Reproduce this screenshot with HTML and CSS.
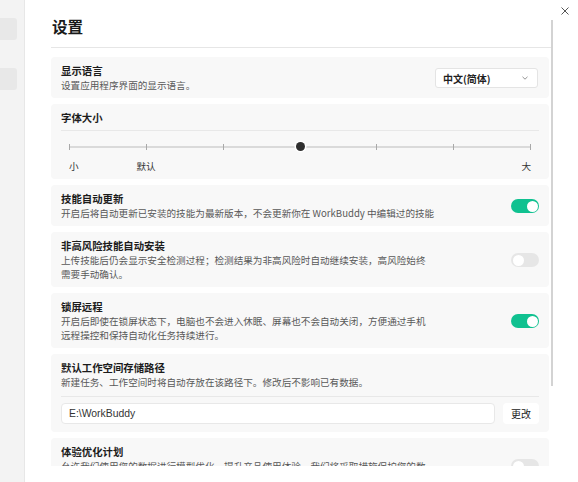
FILE: index.html
```html
<!DOCTYPE html>
<html lang="zh-CN">
<head>
<meta charset="utf-8">
<title>设置</title>
<link rel="stylesheet" href="styles.css">
</head>
<body>
<div class="app">
  <aside class="sidebar">
    <div class="nav-item"></div>
    <div class="nav-item"></div>
  </aside>
  <main class="main">
    <button class="close" aria-label="关闭">
      <svg width="8" height="8" viewBox="0 0 8 8"><path d="M0.5 0.5L7.5 7.5M7.5 0.5L0.5 7.5" stroke="#555" stroke-width="1" fill="none"/></svg>
    </button>
    <div class="scrollbar"></div>
    <div class="content">
      <h1 class="page-title">设置</h1>
      <div class="rule"></div>
      <div class="list">
        <section class="card">
          <div class="card-row">
            <div class="card-text">
              <div class="card-title">显示语言</div>
              <div class="card-desc">设置应用程序界面的显示语言。</div>
            </div>
            <div class="select">
              <span>中文(简体)</span>
              <svg width="6" height="4" viewBox="0 0 6 4"><path d="M0.5 0.8L3 3.2L5.5 0.8" stroke="#888" stroke-width="0.9" fill="none"/></svg>
            </div>
          </div>
        </section>

        <section class="card">
          <div class="card-title">字体大小</div>
          <div class="card-divider"></div>
          <div class="slider">
            <div class="track">
              <span class="tick"></span><span class="tick"></span><span class="tick"></span><span class="tick"></span><span class="tick"></span><span class="tick"></span><span class="tick"></span>
              <span class="thumb"></span>
            </div>
            <div class="scale">
              <span class="s-small">小</span>
              <span class="s-default">默认</span>
              <span class="s-large">大</span>
            </div>
          </div>
        </section>

        <section class="card">
          <div class="card-row">
            <div class="card-text">
              <div class="card-title">技能自动更新</div>
              <div class="card-desc">开启后将自动更新已安装的技能为最新版本，不会更新你在 WorkBuddy 中编辑过的技能</div>
            </div>
            <span class="toggle on"><span class="knob"></span></span>
          </div>
        </section>

        <section class="card">
          <div class="card-row">
            <div class="card-text">
              <div class="card-title">非高风险技能自动安装</div>
              <div class="card-desc">上传技能后仍会显示安全检测过程；检测结果为非高风险时自动继续安装，高风险始终<br>需要手动确认。</div>
            </div>
            <span class="toggle"><span class="knob"></span></span>
          </div>
        </section>

        <section class="card">
          <div class="card-row">
            <div class="card-text">
              <div class="card-title">锁屏远程</div>
              <div class="card-desc">开启后即使在锁屏状态下，电脑也不会进入休眠、屏幕也不会自动关闭，方便通过手机<br>远程操控和保持自动化任务持续进行。</div>
            </div>
            <span class="toggle on"><span class="knob"></span></span>
          </div>
        </section>

        <section class="card">
          <div class="card-title">默认工作空间存储路径</div>
          <div class="card-desc">新建任务、工作空间时将自动存放在该路径下。修改后不影响已有数据。</div>
          <div class="card-divider wide"></div>
          <div class="path-row">
            <div class="path-input">E:\WorkBuddy</div>
            <button class="path-btn">更改</button>
          </div>
        </section>

        <section class="card">
          <div class="card-row">
            <div class="card-text">
              <div class="card-title">体验优化计划</div>
              <div class="card-desc">允许我们使用您的数据进行模型优化，提升产品使用体验。我们将采取措施保护您的数<br>据安全。</div>
            </div>
            <span class="toggle"><span class="knob"></span></span>
          </div>
        </section>
      </div>
    </div>
  </main>
</div>
</body>
</html>
```

FILE: styles.css
```css
html, body {
  margin: 0;
  padding: 0;
  background: #ffffff;
  font-family: "Noto Sans CJK SC", "Noto Sans", sans-serif;
  color: #1f1f1f;
}

.app {
  display: flex;
  height: 482px;
  overflow: hidden;
}

.sidebar {
  width: 24px;
  flex: none;
  background: #f3f3f3;
  border-right: 1px solid #e7e7e7;
  padding-top: 18px;
  display: flex;
  flex-direction: column;
  gap: 28px;
}

.nav-item {
  width: 17px;
  height: 22px;
  background: #e8e8e8;
  border-radius: 0 3px 3px 0;
}

.main {
  flex: 1;
  position: relative;
  padding-left: 26px;
}

.close {
  position: absolute;
  top: 7px;
  right: 9px;
  width: 8px;
  height: 8px;
  padding: 0;
  border: none;
  background: transparent;
  display: flex;
}

.scrollbar {
  position: absolute;
  left: 526px;
  top: 20px;
  width: 2px;
  height: 366px;
  background: #d3d3d3;
}

.content {
  width: 502px;
  height: 466px;
  display: flex;
  flex-direction: column;
}

.page-title {
  margin: 0 0 10px;
  padding: 15px 0 0 1px;
  font-size: 15.6px;
  line-height: 22px;
  font-weight: 700;
  color: #1a1a1a;
}

.rule {
  height: 1px;
  background: #e6e6e6;
  flex: none;
}

.list {
  margin-top: 9px;
  width: 498px;
  flex: 1;
  min-height: 0;
  overflow: hidden;
  display: flex;
  flex-direction: column;
  gap: 6px;
}

.card {
  flex: none;
  background: #f8f8f8;
  border-radius: 4px;
  padding: 7px 10px 6px;
}

.card-row {
  display: flex;
  align-items: center;
  justify-content: space-between;
}

.card-text {
  max-width: 420px;
}

.card-title {
  font-size: 10.4px;
  line-height: 14px;
  font-weight: 700;
  color: #1c1c1c;
}

.card-desc {
  font-size: 9.6px;
  line-height: 14px;
  color: #595959;
}

.select {
  width: 103px;
  height: 20px;
  box-sizing: border-box;
  margin-right: 1px;
  border: 1px solid #e4e4e4;
  border-radius: 3px;
  background: #ffffff;
  display: flex;
  align-items: center;
  justify-content: space-between;
  padding: 0 9px 0 7px;
  font-size: 10px;
  font-weight: 700;
  color: #1f1f1f;
}

.card-divider {
  height: 1px;
  background: #e8e8e8;
  margin-top: 5px;
}

.card-divider.wide {
  margin-top: 7px;
}

.slider {
  padding: 10px 8px 0;
}

.track {
  position: relative;
  height: 12px;
  display: flex;
  justify-content: space-between;
  align-items: center;
}

.track::before {
  content: "";
  position: absolute;
  left: 0;
  right: 0;
  top: 5px;
  height: 2px;
  background: #dadada;
}

.tick {
  position: relative;
  width: 1px;
  height: 6px;
  background: #a9a9a9;
}

.thumb {
  position: absolute;
  left: 50%;
  top: 50%;
  width: 9px;
  height: 9px;
  margin: -5px 0 0 -4.5px;
  border-radius: 50%;
  background: #2f2f2f;
  box-shadow: 0 0 0 1.5px #ffffff;
}

.scale {
  display: grid;
  grid-template-columns: repeat(12, 1fr);
  margin-top: 6px;
  font-size: 9.6px;
  line-height: 14px;
  color: #333333;
}

.s-small {
  grid-column: 1 / 2;
  justify-self: start;
}

.s-default {
  grid-column: 2 / 4;
  justify-self: center;
}

.s-large {
  grid-column: 12 / 13;
  justify-self: end;
}

.toggle {
  flex: none;
  width: 28px;
  height: 14px;
  border-radius: 7px;
  background: #e6e6e6;
  display: flex;
  align-items: center;
  padding: 0 1.5px;
  box-sizing: border-box;
}

.toggle .knob {
  width: 11px;
  height: 11px;
  border-radius: 50%;
  background: #ffffff;
}

.toggle.on {
  background: #10c190;
  justify-content: flex-end;
}

.path-row {
  display: flex;
  gap: 8px;
  margin-top: 6px;
  padding-bottom: 2px;
}

.path-input {
  flex: 1;
  height: 21px;
  box-sizing: border-box;
  border: 1px solid #e8e8e8;
  border-radius: 4px;
  background: #ffffff;
  padding: 0 7px;
  display: flex;
  align-items: center;
  font-family: "Liberation Sans", "Noto Sans CJK SC", sans-serif;
  font-size: 10.4px;
  color: #333333;
}

.path-btn {
  width: 36px;
  height: 21px;
  padding: 0;
  border: none;
  border-radius: 4px;
  background: #ffffff;
  font-family: inherit;
  font-size: 10px;
  color: #222222;
}
```
